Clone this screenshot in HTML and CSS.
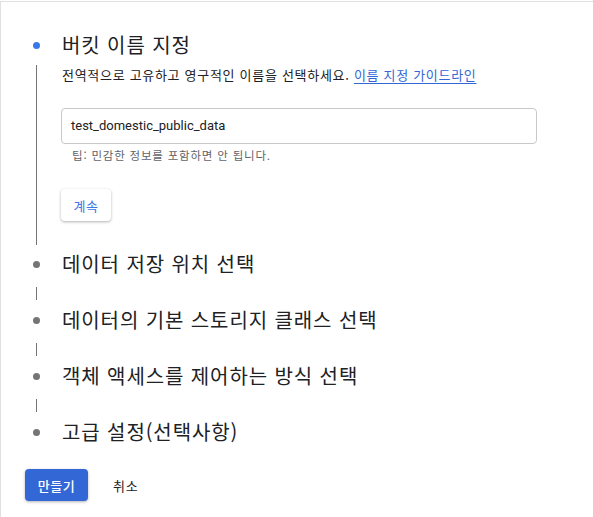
FILE: index.html
```html
<!DOCTYPE html>
<html lang="ko">
<head>
<meta charset="utf-8">
<title>버킷 만들기</title>
<link rel="stylesheet" href="styles.css">
</head>
<body>
<div class="page">
  <div class="stepper">
    <div class="step active">
      <div class="rail"><span class="dot dot-blue"></span></div>
      <div class="step-title">버킷 이름 지정</div>
      <div class="rail rail-line"><span class="line"></span></div>
      <div class="step-body">
        <p class="desc">전역적으로 고유하고 영구적인 이름을 선택하세요. <a class="link" href="#">이름 지정 가이드라인</a></p>
        <div class="field">test_domestic_public_data</div>
        <p class="hint">팁: 민감한 정보를 포함하면 안 됩니다.</p>
        <button class="btn-continue" type="button">계속</button>
      </div>
    </div>

    <div class="step">
      <div class="rail"><span class="dot"></span></div>
      <div class="step-title">데이터 저장 위치 선택</div>
      <div class="rail connector"><span class="seg"></span></div>
      <div></div>
    </div>

    <div class="step">
      <div class="rail"><span class="dot"></span></div>
      <div class="step-title">데이터의 기본 스토리지 클래스 선택</div>
      <div class="rail connector"><span class="seg"></span></div>
      <div></div>
    </div>

    <div class="step">
      <div class="rail"><span class="dot"></span></div>
      <div class="step-title">객체 액세스를 제어하는 방식 선택</div>
      <div class="rail connector"><span class="seg"></span></div>
      <div></div>
    </div>

    <div class="step">
      <div class="rail"><span class="dot"></span></div>
      <div class="step-title">고급 설정(선택사항)</div>
    </div>
  </div>

  <div class="actions">
    <button class="btn-create" type="button">만들기</button>
    <button class="btn-cancel" type="button">취소</button>
  </div>
</div>
</body>
</html>
```

FILE: styles.css
```css
* { box-sizing: border-box; }

html, body {
  margin: 0;
  padding: 0;
  background: #ffffff;
}

body {
  font-family: "Noto Sans CJK KR", "Noto Sans", sans-serif;
  color: #202124;
}

.page {
  margin-top: 1px;
  border-top: 1px solid #e0e0e0;
  border-left: 1px solid #e0e0e0;
  min-height: calc(100vh - 1px);
  padding-top: 29px;
}

.stepper {
  padding-left: 23px;
  display: flex;
  flex-direction: column;
}

.step {
  display: grid;
  grid-template-columns: 24px 1fr;
  column-gap: 13px;
}

.step.active {
  margin-bottom: 5px;
}

.rail {
  display: flex;
  justify-content: center;
  align-items: center;
  height: 28px;
}

.dot {
  width: 7px;
  height: 7px;
  border-radius: 50%;
  background: #757575;
}

.dot-blue {
  background: #3b78e7;
}

.step-title {
  font-size: 20px;
  line-height: 28px;
  height: 28px;
  padding-left: 1px;
  letter-spacing: 0.9px;
  color: #202124;
  white-space: nowrap;
}

.rail-line {
  height: auto;
  align-items: stretch;
  margin-top: 6px;
}

.line {
  width: 1px;
  background: #757575;
}

.connector {
  height: 28px;
  align-items: flex-start;
}

.seg {
  width: 1px;
  height: 13px;
  margin-top: 9px;
  background: #757575;
}

.step-body {
  margin-top: 6px;
  padding-bottom: 24px;
}

.desc {
  margin: 0;
  font-size: 13px;
  line-height: 20px;
  padding-left: 1px;
  letter-spacing: 0.7px;
  color: #202124;
}

.link {
  color: #3367d6;
  text-decoration: underline;
  text-underline-offset: 3px;
}

.field {
  margin-top: 23px;
  width: 476px;
  height: 36px;
  border: 1px solid #c8c8c8;
  border-radius: 4px;
  padding-left: 9px;
  font-family: Roboto, "Noto Sans CJK KR", sans-serif;
  font-size: 13px;
  line-height: 34px;
  color: #202124;
}

.hint {
  margin: 3px 0 0;
  padding-left: 11px;
  font-size: 11.5px;
  line-height: 16px;
  letter-spacing: 0.8px;
  color: #5f6368;
}

.btn-continue {
  margin-top: 26px;
  width: 50px;
  height: 32px;
  border: none;
  border-radius: 4px;
  background: #ffffff;
  box-shadow: 0 1px 3px rgba(0, 0, 0, 0.3);
  font-family: "Noto Sans CJK KR", sans-serif;
  font-size: 13px;
  letter-spacing: 0.6px;
  color: #3b78e7;
  padding: 0;
  display: block;
}

.actions {
  margin-top: 23px;
  padding-left: 24px;
  display: flex;
  align-items: center;
  gap: 13px;
}

.btn-create {
  width: 63px;
  height: 32px;
  border: none;
  border-radius: 4px;
  background: #3367d6;
  box-shadow: 0 1px 3px rgba(0, 0, 0, 0.3);
  color: #ffffff;
  font-family: "Noto Sans CJK KR", sans-serif;
  font-size: 13px;
  font-weight: 500;
  letter-spacing: 0.6px;
  padding: 0;
}

.btn-cancel {
  height: 32px;
  border: none;
  background: transparent;
  color: #202124;
  font-family: "Noto Sans CJK KR", sans-serif;
  font-size: 13px;
  letter-spacing: 0.8px;
  padding: 0 12px;
}
```
